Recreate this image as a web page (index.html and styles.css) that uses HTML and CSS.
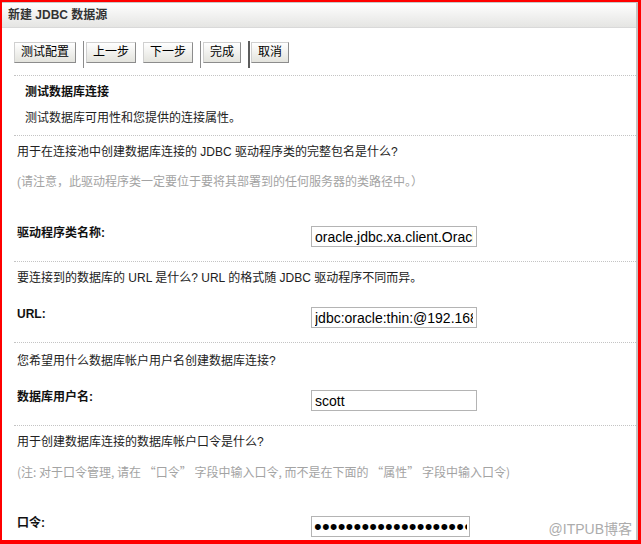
FILE: index.html
```html
<!DOCTYPE html>
<html lang="zh-CN">
<head>
<meta charset="utf-8">
<title>新建 JDBC 数据源</title>
<link rel="stylesheet" href="styles.css">
</head>
<body>
<div class="frame">
  <div class="panel">
    <div class="header">新建 JDBC 数据源</div>
    <div class="body">
      <div class="toolbar">
        <button class="btn" type="button">测试配置</button>
        <span class="sep"></span>
        <button class="btn" type="button">上一步</button>
        <button class="btn" type="button">下一步</button>
        <span class="sep"></span>
        <button class="btn" type="button">完成</button>
        <span class="sep sep-strong"></span>
        <button class="btn" type="button">取消</button>
      </div>

      <div class="intro">
        <div class="intro-title">测试数据库连接</div>
        <div class="intro-desc">测试数据库可用性和您提供的连接属性。</div>
      </div>

      <div class="section">
        <div class="question">用于在连接池中创建数据库连接的 JDBC 驱动程序类的完整包名是什么?</div>
        <div class="note">(请注意，此驱动程序类一定要位于要将其部署到的任何服务器的类路径中。）</div>
        <div class="field">
          <label class="label">驱动程序类名称:</label>
          <input class="input" type="text" value="oracle.jdbc.xa.client.OracleXADataSource">
        </div>
      </div>

      <div class="section">
        <div class="question">要连接到的数据库的 URL 是什么? URL 的格式随 JDBC 驱动程序不同而异。</div>
        <div class="field">
          <label class="label">URL:</label>
          <input class="input" type="text" value="jdbc:oracle:thin:@192.168.1.10:1521:orcl">
        </div>
      </div>

      <div class="section section-user">
        <div class="question">您希望用什么数据库帐户用户名创建数据库连接?</div>
        <div class="field">
          <label class="label">数据库用户名:</label>
          <input class="input" type="text" value="scott">
        </div>
      </div>

      <div class="section">
        <div class="question">用于创建数据库连接的数据库帐户口令是什么?</div>
        <div class="note note-cjk">(注: 对于口令管理, 请在 “口令” 字段中输入口令, 而不是在下面的 “属性” 字段中输入口令)</div>
        <div class="field">
          <label class="label">口令:</label>
          <input class="input input-password" type="password" value="tigertigertigertiger12">
        </div>
      </div>
    </div>
  </div>
  <div class="watermark">@ITPUB博客</div>
</div>
</body>
</html>
```

FILE: styles.css
```css
html, body {
  margin: 0;
  padding: 0;
  background: #fff;
}

.frame {
  position: relative;
  width: 641px;
  height: 544px;
  box-sizing: border-box;
  border-style: solid;
  border-color: #ff0000;
  border-width: 2px 3px 4px 2px;
  overflow: hidden;
  background: #fff;
  font-family: "Liberation Sans", "Noto Sans CJK SC", sans-serif;
  font-size: 12px;
  line-height: 16px;
  color: #222;
}

.panel {
  height: 100%;
  box-sizing: border-box;
  border-top: 1px solid #c8c8c8;
  border-right: 2px solid #c4c4c4;
  overflow: hidden;
}

.header {
  height: 24px;
  line-height: 24px;
  padding-left: 6px;
  font-weight: bold;
  color: #333;
  background: linear-gradient(#fefefe, #e5e5e3);
  border-bottom: 1px solid #d9d9d9;
}

.body {
  padding-left: 12px;
}

.toolbar {
  display: flex;
  align-items: flex-start;
  height: 27px;
  margin-top: 13px;
}

.btn {
  box-sizing: border-box;
  height: 21px;
  margin: 1px 7px 0 0;
  padding: 0 6px;
  font-family: "Liberation Sans", "Noto Sans CJK SC", sans-serif;
  font-size: 12px;
  line-height: 19px;
  color: #000;
  background: linear-gradient(#ffffff, #e3e3dd);
  border: 1px solid;
  border-color: #d0d0d0 #8c8c8c #8c8c8c #d0d0d0;
  border-radius: 0;
  cursor: pointer;
}

.sep {
  width: 1px;
  height: 27px;
  margin-right: 2px;
  background: #8c8c8c;
}

.sep-strong {
  width: 2px;
  margin-right: 1px;
  background: #5c5c5c;
}

.intro {
  margin-top: 7px;
  border-top: 1px dotted #c4c4c4;
  padding: 8px 0 9px 11px;
}

.intro-title {
  font-weight: bold;
  color: #111;
}

.intro-desc {
  margin-top: 10px;
}

.section {
  border-top: 1px dotted #c4c4c4;
  padding: 8px 0 14px 3px;
}

.section-user {
  padding-top: 10px;
}

.note {
  margin-top: 14px;
  color: #a3a3a3;
}

.note-cjk {
  font-family: "Noto Sans CJK SC", "Liberation Sans", sans-serif;
}

.field {
  display: flex;
  align-items: flex-start;
  margin-top: 20px;
}

.note + .field {
  margin-top: 35px;
}

.label {
  width: 294px;
  flex: none;
  font-weight: bold;
  color: #111;
}

.input {
  box-sizing: border-box;
  width: 166px;
  height: 21px;
  margin: 1px 0 0 0;
  padding: 0 3px;
  border: 1px solid #b4b4b4;
  border-radius: 0;
  font-family: "Liberation Sans", sans-serif;
  font-size: 14px;
  color: #000;
  background: #fff;
  outline: none;
}

.input-password {
  width: 159px;
  padding: 0 2px;
  font-size: 22px;
  letter-spacing: 0.2px;
}

.watermark {
  position: absolute;
  right: 6px;
  bottom: 3px;
  font-family: "Liberation Sans", "Noto Sans CJK SC", sans-serif;
  font-size: 14px;
  line-height: 16px;
  color: #acacac;
}
```
